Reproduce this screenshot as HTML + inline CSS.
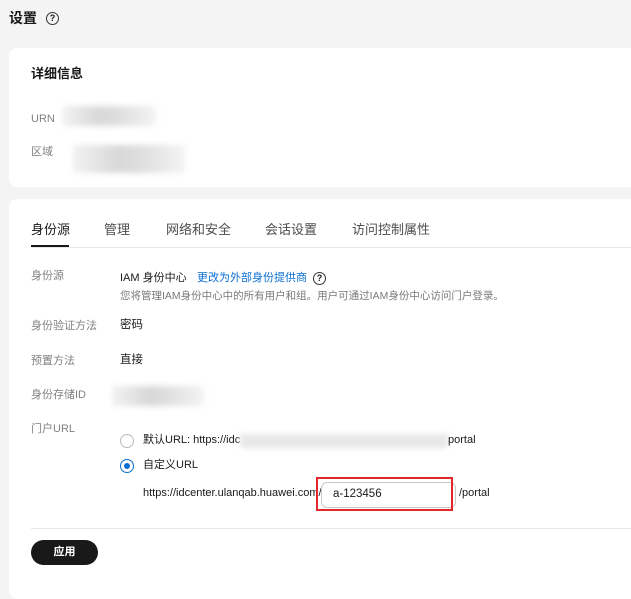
<!DOCTYPE html>
<html><head><meta charset="utf-8"><style>
*{margin:0;padding:0;box-sizing:border-box}
body{width:631px;height:581px;background:#f4f4f4;font-family:"Liberation Sans","Noto Sans CJK SC",sans-serif;color:#191919;position:relative;overflow:hidden}
.a{position:absolute;white-space:nowrap;line-height:1}
.card{position:absolute;background:#fff;border-radius:8px}
.lbl{font-size:11px;color:#808080}
.v{font-size:11.5px}
.blur{position:absolute;background:linear-gradient(90deg,#f2f2f2,#d8d8d8 40%,#dedede 60%,#f4f4f4);filter:blur(3px)}
.q{position:absolute;width:13px;height:13px;border:1.3px solid #333;border-radius:50%;font-size:9px;line-height:11px;text-align:center;font-weight:bold}
.tab{font-size:13px;color:#4d4d4d;top:223px}
.radio{position:absolute;width:14px;height:14px;border:1px solid #bbb;border-radius:50%;background:#fff}
</style></head><body>
<div class="a" style="left:9px;top:11px;font-size:14px;font-weight:bold">设置</div>
<div class="q" style="left:46px;top:12px">?</div>

<div class="card" style="left:9px;top:48px;width:640px;height:139px"></div>
<div class="a" style="left:31px;top:67px;font-size:13px;font-weight:bold">详细信息</div>
<div class="a lbl" style="left:31px;top:114px">URN</div>
<div class="blur" style="left:62px;top:106px;width:94px;height:20px"></div>
<div class="a lbl" style="left:31px;top:147px">区域</div>
<div class="blur" style="left:73px;top:145px;width:112px;height:28px"></div>

<div class="card" style="left:9px;top:199px;width:640px;height:400px"></div>
<div class="a tab" style="left:31px;color:#191919">身份源</div>
<div class="a tab" style="left:104px">管理</div>
<div class="a tab" style="left:166px">网络和安全</div>
<div class="a tab" style="left:265px">会话设置</div>
<div class="a tab" style="left:352px">访问控制属性</div>
<div style="position:absolute;left:31px;top:247px;width:600px;height:1px;background:#e8e8e8"></div>
<div style="position:absolute;left:31px;top:245px;width:38px;height:2px;background:#191919"></div>

<div class="a lbl" style="left:31px;top:271px">身份源</div>
<div class="a v" style="left:120px;top:273px;font-size:11px">IAM 身份中心</div>
<div class="a v" style="left:197px;top:273px;color:#0a6ed1;font-size:11px">更改为外部身份提供商</div>
<div class="q" style="left:313px;top:272px">?</div>
<div class="a lbl" style="left:120px;top:291px;color:#7a7a7a;font-size:10.5px">您将管理IAM身份中心中的所有用户和组。用户可通过IAM身份中心访问门户登录。</div>

<div class="a lbl" style="left:31px;top:321px">身份验证方法</div>
<div class="a v" style="left:120px;top:320px">密码</div>
<div class="a lbl" style="left:31px;top:356px">预置方法</div>
<div class="a v" style="left:120px;top:355px">直接</div>
<div class="a lbl" style="left:31px;top:390px">身份存储ID</div>
<div class="blur" style="left:112px;top:386px;width:92px;height:20px"></div>
<div class="a lbl" style="left:31px;top:424px">门户URL</div>

<div class="radio" style="left:120px;top:434px"></div>
<div class="a v" style="left:143px;top:435px;font-size:11px">默认URL: https://idc</div>
<div class="blur" style="left:240px;top:434px;width:208px;height:14px;background:#e8e8e8"></div>
<div class="a v" style="left:448px;top:435px;font-size:11px">portal</div>
<div class="radio" style="left:120px;top:459px;border-color:#0a6ed1;border-width:1.5px"><div style="position:absolute;left:2.5px;top:2.5px;width:6px;height:6px;border-radius:50%;background:#0a6ed1"></div></div>
<div class="a v" style="left:143px;top:460px;font-size:11px">自定义URL</div>
<div class="a v" style="left:143px;top:488px;font-size:11px">https://idcenter.ulanqab.huawei.com/</div>
<div style="position:absolute;left:321px;top:482px;width:135px;height:26px;border:1px solid #c8c8c8;border-radius:6px;background:#fff"></div>
<div class="a v" style="left:333px;top:489px">a-123456</div>
<div style="position:absolute;left:316px;top:477px;width:137px;height:34px;border:2px solid #e3262a"></div>
<div class="a v" style="left:459px;top:488px;font-size:11px">/portal</div>

<div style="position:absolute;left:31px;top:528px;width:600px;height:1px;background:#e8e8e8"></div>
<div style="position:absolute;left:31px;top:540px;width:67px;height:25px;border-radius:13px;background:#191919;color:#fff;font-size:11px;font-weight:bold;text-align:center;line-height:25px">应用</div>
</body></html>
